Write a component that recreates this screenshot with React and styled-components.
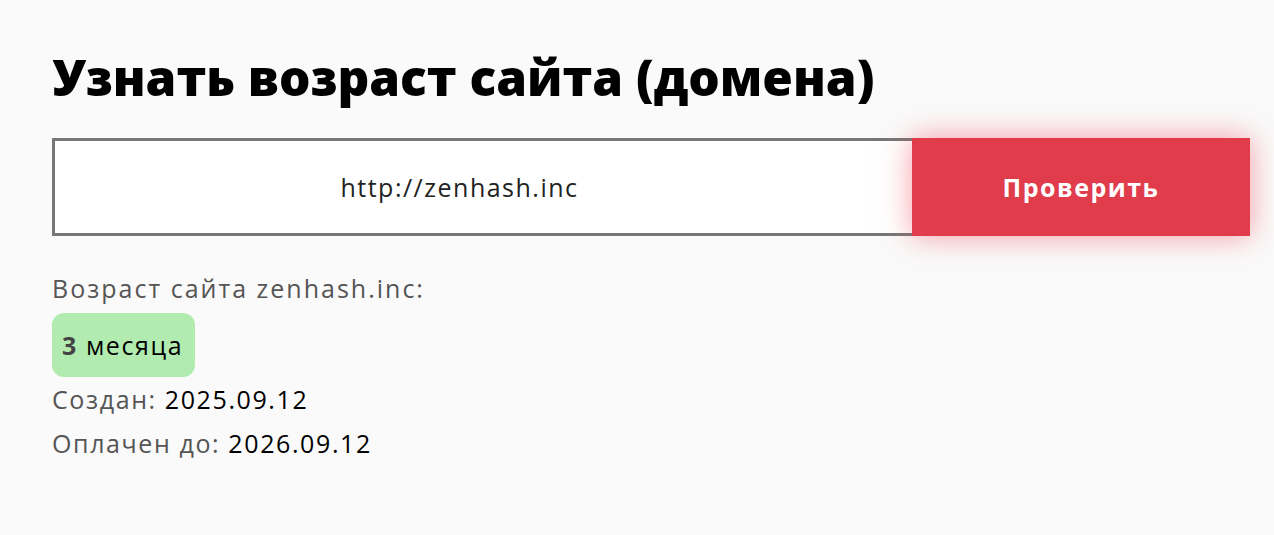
import styled, { createGlobalStyle } from 'styled-components'

const Global = createGlobalStyle`
    html, body {
        margin: 0;
        background: #fafafa;
        font-family: "Open Sans", "Noto Sans", sans-serif;
    }
`

const Page = styled.main`
    padding: 48px 24px 40px 52px;
`

const Title = styled.h1`
    margin: 0 0 31px;
    font-size: 49.5px;
    font-weight: 800;
    color: #000;
    line-height: 1.2;
`

const Form = styled.form`
    display: flex;
    height: 98px;
`

const Input = styled.input`
    flex: 1;
    box-sizing: border-box;
    height: 100%;
    padding: 0 48px 0 0;
    border: 3px solid #777;
    border-right: none;
    background: #fff;
    text-align: center;
    font-family: inherit;
    font-size: 25px;
    letter-spacing: 1.5px;
    color: #222;
    outline: none;
`

const Button = styled.button`
    width: 338px;
    border: none;
    background: #e03c4c;
    color: #fff;
    font-family: inherit;
    font-size: 25px;
    font-weight: 700;
    letter-spacing: 1.5px;
    box-shadow: 0 0 28px rgba(240, 60, 80, 0.5);
    cursor: pointer;
`

const Result = styled.section`
    margin-top: 30px;
    display: flex;
    flex-direction: column;
    align-items: flex-start;
    font-size: 25px;
    letter-spacing: 1.6px;
    color: #555;
`

const Line = styled.div`
    line-height: 44px;
`

const Lead = styled(Line)`
    letter-spacing: 2px;
`

const Value = styled.span`
    color: #000;
`

const Badge = styled.div`
    margin: 3px 0 0;
    padding: 0 12px 0 10px;
    height: 64px;
    display: flex;
    align-items: center;
    gap: 8px;
    background: #b2ebb0;
    border-radius: 12px;
    color: #000;
    b {
        color: #444;
    }
`

export default function App() {
    return <Page>
        <Global />
        <Title>Узнать возраст сайта (домена)</Title>
        <Form onSubmit={e => e.preventDefault()}>
            <Input defaultValue="http://zenhash.inc" />
            <Button type="submit">Проверить</Button>
        </Form>
        <Result>
            <Lead>Возраст сайта zenhash.inc:</Lead>
            <Badge><b>3</b>месяца</Badge>
            <Line>Создан: <Value>2025.09.12</Value></Line>
            <Line>Оплачен до: <Value>2026.09.12</Value></Line>
        </Result>
    </Page>
}
